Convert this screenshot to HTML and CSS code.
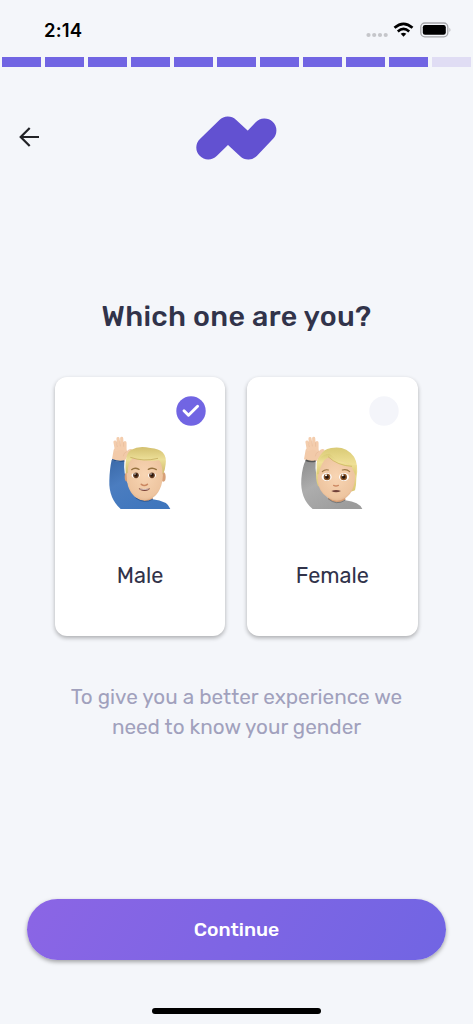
FILE: index.html
```html
<!DOCTYPE html>
<html lang="en">
<head>
<meta charset="utf-8">
<meta name="viewport" content="width=device-width, initial-scale=1">
<title>Which one are you?</title>
<link rel="stylesheet" href="styles.css">
</head>
<body>
<main class="screen">
  <div class="status">
    <span class="time">2:14</span>
    <svg class="status-icons" width="86" height="18" viewBox="0 0 86 18">
      <g fill="#c5c6ca"><circle cx="3.5" cy="14" r="2.1"/><circle cx="9.2" cy="14" r="2.1"/><circle cx="15" cy="14" r="2.1"/><circle cx="20.7" cy="14" r="2.1"/></g>
      <g fill="none" stroke="#000" stroke-width="2.7"><path d="M29.500 6.8Q38.500 -1.2 47.500 6.8"/><path d="M32.8 10.4Q38.5 5.5 44.200 10.400"/></g>
      <path d="M35.700 12.800Q38.500 10.600 41.300 12.800L38.500 15.700Z"/>
      <rect x="55.800" y="2" width="27" height="13.800" rx="4" fill="none" stroke="#a6a7aa" stroke-width="1.300"/>
      <rect x="57.800" y="4" width="23" height="9.800" rx="2.200"/>
      <path d="M84.500 6.800Q86.300 8.900 84.500 11Z" fill="#a6a7aa"/>
    </svg>
  </div>
  <div class="progress">
    <i></i><i></i><i></i><i></i><i></i><i></i><i></i><i></i><i></i><i></i><i class="todo"></i>
  </div>
  <header class="header">
    <svg class="back" width="22" height="22" viewBox="0 0 22 22" fill="none" stroke="#222327" stroke-width="2.200"><path d="M20 11H2M10.700 1.900L1.700 11L10.700 20.100"/></svg>
    <svg class="logo" width="82" height="46" viewBox="0 0 82 46"><path d="M13.300 32.500L32.800 13.500L53.300 32.500L69.400 15.500" fill="none" stroke="#6251d1" stroke-width="24" stroke-linecap="round" stroke-linejoin="round"/></svg>
  </header>
  <h1 class="title">Which one are you?</h1>
  <div class="cards">
    <section class="card">
      <svg class="check" width="30" height="30" viewBox="0 0 30 30"><circle cx="15" cy="15" r="14.700" fill="#7165e3"/><path d="M8 14.700L12.500 19.300L21.600 10.200" fill="none" stroke="#fff" stroke-width="2.900" stroke-linecap="round" stroke-linejoin="round"/></svg>
      <svg class="person" width="80" height="90" viewBox="0 0 240 270">
        <defs>
          <linearGradient id="blue" x2=".7" y2="1"><stop stop-color="#3a69a8"/><stop offset=".4" stop-color="#4b7dc0"/><stop offset="1" stop-color="#3f76bd"/></linearGradient>
          <radialGradient id="skin" cx=".5" cy=".45" r=".65"><stop stop-color="#f8d5b3"/><stop offset=".75" stop-color="#eec5a0"/><stop offset="1" stop-color="#d6a57d"/></radialGradient>
          <linearGradient id="hair" x2="0" y2="1"><stop stop-color="#d3c06f"/><stop offset=".45" stop-color="#ecdf98"/><stop offset="1" stop-color="#cdb766"/></linearGradient>
          <g id="raised-hand">
            <path d="M41 65Q47 55 75 58L81 69Q91 59 98 66Q87 78 79 90L74 99Q54 102 36 94Z" fill="#f2caa9"/>
            <path d="M49 65L45 42M58 62L54 32M67 62L65 31M75 66L75 44" fill="none" stroke="#f4cdad" stroke-width="9.500" stroke-linecap="round"/>
            <path d="M52 57L49.500 41M61 55L60 38M71 56L70.500 43M80 71Q70 75 70 85" fill="none" stroke="#e2b592" stroke-width="1.500"/>
          </g>
        </defs>
        <path d="M35 96Q53 103 73 100Q70 136 83 164Q94 192 111 208Q137 222 158 214Q203 219 211 243H62Q26 210 28 158Q29 122 35 96Z" fill="url(#blue)"/>
        <path d="M110 191H158V213Q135 228 108 210Z" fill="#d69d73"/>
        <use href="#raised-hand"/>
        <path d="M36 95Q54 102 73 99" fill="none" stroke="#25528f" stroke-width="4"/>
        <ellipse cx="81" cy="147" rx="7" ry="14" fill="#d7a078"/><ellipse cx="190" cy="147" rx="7" ry="14" fill="#d7a078"/>
        <path d="M81 101Q88 76 132 76Q178 76 187 104Q192 146 184 172Q170 215 134 217Q98 215 84 174Q77 143 81 101Z" fill="url(#skin)"/>
        <path d="M77 134Q73 76 94 65Q117 52 151 60Q203 63 197 109Q196 126 188 140Q187 106 177 97Q128 102 98 91Q83 103 83 136Z" fill="url(#hair)"/>
        <path d="M91 88Q131 102 174 91" fill="none" stroke="#bca251" stroke-width="2"/>
        <path d="M95 125Q104 117 117 124M145 124Q157 117 169 125" fill="none" stroke="#96723f" stroke-width="4" stroke-linecap="round"/>
        <g fill="#fff"><ellipse cx="107" cy="142" rx="12" ry="8"/><ellipse cx="156" cy="142" rx="12" ry="8"/></g>
        <g fill="#653b20"><circle cx="108" cy="142" r="8.500"/><circle cx="156" cy="142" r="8.500"/></g>
        <g fill="#24150f"><circle cx="108" cy="141" r="4.500"/><circle cx="156" cy="141" r="4.500"/></g>
        <g fill="#fff"><circle cx="105" cy="138" r="2"/><circle cx="153" cy="138" r="2"/></g>
        <path d="M124 169Q133 176 142 169" fill="none" stroke="#cb8761" stroke-width="5" stroke-linecap="round"/>
        <path d="M116 181Q134 186 150 181Q147 189 134 189Q120 189 116 181Z" fill="#774037"/><path d="M120 183Q134 186 146 183" stroke="#fff" stroke-width="2" fill="none"/>
        <path d="M107 210Q134 229 159 213" fill="none" stroke="#2e5c98" stroke-width="3"/>
      </svg>
      <span class="label">Male</span>
    </section>
    <section class="card">
      <svg class="check" width="30" height="30" viewBox="0 0 30 30"><circle cx="15" cy="15" r="14.700" fill="#f4f5fa"/></svg>
      <svg class="person" width="80" height="90" viewBox="0 0 240 270">
        <defs>
          <linearGradient id="gray" x2=".7" y2="1"><stop stop-color="#8d8d8d"/><stop offset=".45" stop-color="#adadad"/><stop offset="1" stop-color="#9c9c9c"/></linearGradient>
          <linearGradient id="blond" x2="0" y2="1"><stop stop-color="#d9ca75"/><stop offset=".4" stop-color="#f0e197"/><stop offset="1" stop-color="#dbc873"/></linearGradient>
        </defs>
        <path d="M41 97Q55 103 71 101Q68 137 82 166Q93 196 111 212Q137 226 160 217Q202 222 211 243H62Q24 212 28 153Q31 116 41 97Z" fill="url(#gray)"/>
        <path d="M110 191H160V216Q137 231 108 214Z" fill="#d69d73"/>
        <path d="M78 174Q69 154 74 119Q70 71 117 60Q160 51 186 86Q201 111 193 151Q193 173 189 187Q176 195 160 184H104Z" fill="url(#blond)"/>
        <use href="#raised-hand"/>
        <path d="M41 97Q54 103 71 99" fill="none" stroke="#555" stroke-width="5"/>
        <path d="M78 124Q83 91 111 87L173 108Q190 117 189 153Q186 190 164 208Q134 228 106 208Q80 191 77 158Z" fill="url(#skin)"/>
        <path d="M75 139Q73 78 112 77Q137 103 194 112L191 143Q183 124 178 116Q139 115 110 87Q87 99 80 139Z" fill="url(#blond)"/>
        <path d="M108 86Q137 113 180 115" fill="none" stroke="#c6ad58" stroke-width="2"/>
        <path d="M91 131Q99 123 109 126M151 126Q164 122 173 131" fill="none" stroke="#9b7746" stroke-width="3.500" stroke-linecap="round"/>
        <g fill="#fff"><ellipse cx="104" cy="147" rx="15" ry="12"/><ellipse cx="156" cy="147" rx="15" ry="12"/></g>
        <g fill="#885225"><circle cx="105" cy="147" r="10"/><circle cx="155" cy="147" r="10"/></g>
        <g fill="#24150f"><circle cx="105" cy="147" r="5.500"/><circle cx="155" cy="147" r="5.500"/></g>
        <g fill="#fff"><circle cx="102" cy="142" r="3"/><circle cx="152" cy="142" r="3"/></g>
        <path d="M125 172Q132 176 139 172" fill="none" stroke="#cb8761" stroke-width="4" stroke-linecap="round"/>
        <path d="M118 189Q132 183 147 189Q132 197 118 189Z" fill="#704038"/>
        <path d="M108 212Q134 234 160 216" fill="none" stroke="#777" stroke-width="3"/>
      </svg>
      <span class="label">Female</span>
    </section>
  </div>
  <p class="hint">To give you a better experience we<br>need to know your gender</p>
  <button class="continue">Continue</button>
  <div class="home"></div>
</main>
</body>
</html>
```
FILE: styles.css
```css
* { box-sizing: border-box; }
body { margin: 0; background: #f4f6fa; font-family: Rubik, Roboto, sans-serif; color: #31334a; }
.screen { width: 473px; height: 1024px; display: flex; flex-direction: column; overflow: hidden; }
.status { height: 57px; flex: none; display: flex; justify-content: space-between; padding: 20px 22px 0 44px; }
.time { font: 600 18.5px/21px Inter, sans-serif; color: #000; letter-spacing: .2px; }
.status-icons { margin-top: 1px; }
.progress { height: 10px; flex: none; display: flex; gap: 4.4px; padding: 0 2.3px; }
.progress i { flex: 1; background: #7165e3; }
.progress .todo { background: #e0ddf4; }
.header { height: 94px; flex: none; display: grid; grid-template-columns: 1fr 82px 1fr; align-items: start; padding: 48px 19px 0 18px; }
.back { margin: 11px 0 0 1px; }
.title { margin: 135px 0 0; height: 40px; font-size: 28.6px; line-height: 40px; font-weight: 500; text-align: center; letter-spacing: .3px; }
.cards { display: flex; gap: 22px; padding: 0 55.5px 0 55px; margin-top: 41px; height: 259px; }
.card { flex: 1; display: flex; flex-direction: column; align-items: center; background: #fff; border-radius: 12px; box-shadow: 0 2px 4px rgba(0,0,0,.3); padding: 19px 19px 0; }
.check { align-self: flex-end; }
.person { margin-top: 2px; }
.label { margin-top: 43px; font-size: 21.7px; line-height: 30px; }
.hint { margin: 46px 0 0; text-align: center; font-size: 20.7px; line-height: 30px; color: #a1a1bd; }
.continue { margin: 157px 27px 0; height: 61px; flex: none; border: 0; border-radius: 31px; background: linear-gradient(120deg, #8b65e5, #7165e3); color: #fff; font: 500 19.4px/28px Rubik, Roboto, sans-serif; padding: 1px 0 0; box-shadow: 0 2px 4px rgba(0,0,0,.35); }
.home { width: 169px; height: 6px; flex: none; margin: 48px auto 0; border-radius: 3px; background: #000; }
```
